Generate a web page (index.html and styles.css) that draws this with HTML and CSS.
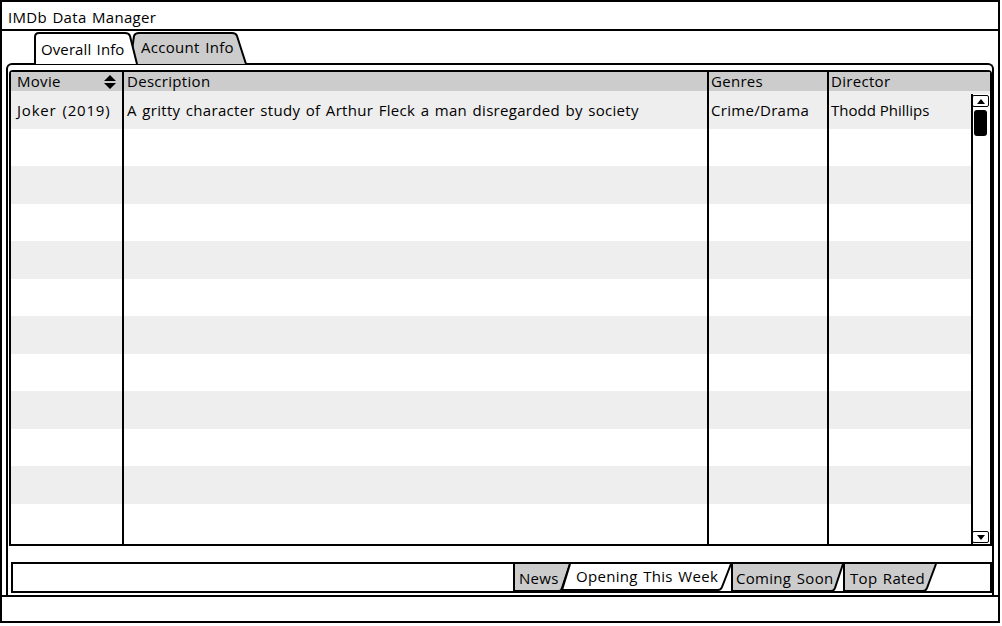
FILE: index.html
```html
<!DOCTYPE html>
<html>
<head>
<meta charset="utf-8">
<link rel="stylesheet" href="styles.css">
</head>
<body>
<div class="window">
  <div class="titlebar">IMDb Data Manager</div>
  <div class="main">
    <div class="tabrow">
      <div class="tabstrip">
        <svg class="shapes" width="216" height="32" viewBox="0 0 216 32">
          <path class="off" d="M96,32 L100,4 Q101,1 105,1 H198 Q202,1 203,4 L212,32"/>
          <path class="on" d="M1,32 V5 Q1,1 5,1 H91 Q95,1 96,4 L103,32"/>
        </svg>
        <span class="tl tl-overall">Overall Info</span>
        <span class="tl tl-account">Account Info</span>
      </div>
    </div>
    <div class="panel">
      <div class="grid">
        <div class="ghead">
          <div class="hc c1"><span>Movie</span>
            <svg class="sort" width="12" height="14" viewBox="0 0 12 14"><path d="M0,6 L6,0 L12,6 Z M0,8 L12,8 L6,14 Z"/></svg>
          </div>
          <div class="hc c2">Description</div>
          <div class="hc c3">Genres</div>
          <div class="hc c4">Director</div>
        </div>
        <div class="gbody">
          <div class="row alt"><div class="cell c1 year">Joker (2019)</div><div class="cell c2">A gritty character study of Arthur Fleck a man disregarded by society</div><div class="cell c3">Crime/Drama</div><div class="cell c4">Thodd Phillips</div></div>
          <div class="row"><div class="cell c1"></div><div class="cell c2"></div><div class="cell c3"></div><div class="cell c4"></div></div>
          <div class="row alt"><div class="cell c1"></div><div class="cell c2"></div><div class="cell c3"></div><div class="cell c4"></div></div>
          <div class="row"><div class="cell c1"></div><div class="cell c2"></div><div class="cell c3"></div><div class="cell c4"></div></div>
          <div class="row alt"><div class="cell c1"></div><div class="cell c2"></div><div class="cell c3"></div><div class="cell c4"></div></div>
          <div class="row"><div class="cell c1"></div><div class="cell c2"></div><div class="cell c3"></div><div class="cell c4"></div></div>
          <div class="row alt"><div class="cell c1"></div><div class="cell c2"></div><div class="cell c3"></div><div class="cell c4"></div></div>
          <div class="row"><div class="cell c1"></div><div class="cell c2"></div><div class="cell c3"></div><div class="cell c4"></div></div>
          <div class="row alt"><div class="cell c1"></div><div class="cell c2"></div><div class="cell c3"></div><div class="cell c4"></div></div>
          <div class="row"><div class="cell c1"></div><div class="cell c2"></div><div class="cell c3"></div><div class="cell c4"></div></div>
          <div class="row alt"><div class="cell c1"></div><div class="cell c2"></div><div class="cell c3"></div><div class="cell c4"></div></div>
          <div class="row last"><div class="cell c1"></div><div class="cell c2"></div><div class="cell c3"></div><div class="cell c4"></div></div>
          <div class="scrollbar">
            <div class="sb-btn"><svg width="8" height="5" viewBox="0 0 8 5"><path d="M0,5 L4,0 L8,5 Z"/></svg></div>
            <div class="sb-thumb"></div>
            <div class="sb-space"></div>
            <div class="sb-btn"><svg width="8" height="5" viewBox="0 0 8 5"><path d="M0,0 L8,0 L4,5 Z"/></svg></div>
          </div>
        </div>
      </div>
      <div class="bottombox">
        <div class="btabs">
          <svg class="shapes" width="424" height="29" viewBox="0 0 424 29">
            <path class="off" d="M1,0 V27 H46 Q48,27 49,24 L57,0"/>
            <path class="off" d="M219,0 V27 H318 Q321,27 322,24 L330,0"/>
            <path class="off" d="M331,0 V27 H410 Q413,27 414,24 L423,0"/>
            <path class="on" d="M57,0 L49,26 H205 Q208,26 209,23 L218,0"/>
          </svg>
          <span class="bl bl-news">News</span>
          <span class="bl bl-open">Opening This Week</span>
          <span class="bl bl-coming">Coming Soon</span>
          <span class="bl bl-top">Top Rated</span>
        </div>
      </div>
    </div>
  </div>
  <div class="status"></div>
</div>
</body>
</html>
```

FILE: styles.css
```css
* { box-sizing: border-box; }
body {
  margin: 0;
  background: #fff;
  font-family: "Open Sans", "Liberation Sans", sans-serif;
  font-size: 15px;
  letter-spacing: 0.3px;
  word-spacing: 1.3px;
  color: #000;
}
.window {
  width: 1000px;
  height: 623px;
  border: 2px solid #000;
  display: flex;
  flex-direction: column;
}
.titlebar {
  flex: none;
  height: 29px;
  border-bottom: 2px solid #000;
  padding: 3px 0 0 6px;
  line-height: 24px;
  white-space: nowrap;
}
.main {
  flex: none;
  height: 564px;
  padding: 1px 4px 0 4px;
  display: flex;
  flex-direction: column;
}
.tabrow {
  flex: none;
  height: 31px;
  padding-left: 28px;
}
.tabstrip {
  position: relative;
  width: 216px;
  height: 31px;
  display: flex;
  align-items: flex-start;
}
.shapes {
  position: absolute;
  left: 0;
  top: 0;
}
.shapes path {
  stroke: #000;
  stroke-width: 2;
  stroke-linejoin: round;
}
.shapes .off { fill: #cccccc; }
.shapes .on { fill: #ffffff; }
.tl, .bl {
  position: relative;
  line-height: 20px;
  white-space: nowrap;
}
.tl-overall { width: 100px; padding: 7px 0 0 7px; letter-spacing: 0.1px; }
.tl-account { width: 112px; padding: 5px 0 0 7px; }

.panel {
  flex: 1;
  border: 2px solid #000;
  border-bottom: none;
  border-radius: 6px 6px 0 0;
  padding: 5px 0 0 1px;
  display: flex;
  flex-direction: column;
}
.grid {
  flex: none;
  height: 476px;
  border: 2px solid #000;
  border-radius: 4px 4px 0 0;
  display: flex;
  flex-direction: column;
}
.ghead, .row {
  display: grid;
  grid-template-columns: 113px 585px 120px 1fr;
}
.ghead {
  flex: none;
  height: 19px;
  background: #cccccc;
  line-height: 19px;
}
.hc, .cell {
  border-right: 2px solid #000;
  white-space: nowrap;
  overflow: hidden;
}
.c4 { border-right: none; }
.hc.c1 {
  display: flex;
  justify-content: space-between;
  align-items: center;
  padding: 0 6px 0 6px;
}
.hc.c2 { padding-left: 3px; }
.hc.c3, .hc.c4 { padding-left: 2px; }
.sort path { fill: #000; }
.gbody {
  flex: 1;
  position: relative;
  display: flex;
  flex-direction: column;
}
.row { flex: 0 0 37.5px; }
.row.last { flex: 1 1 auto; }
.row.alt { background: #eeeeee; }
.cell {
  display: flex;
  align-items: center;
}
.cell.c1 { padding-left: 6px; }
.cell.c2 { padding-left: 3px; }
.cell.c3 { padding-left: 2px; }
.cell.c4 { padding-left: 2px; letter-spacing: 0; word-spacing: 0; }
.cell.year { letter-spacing: 0.8px; }

.scrollbar {
  position: absolute;
  top: 3px;
  right: 0;
  bottom: 0;
  width: 19px;
  border-left: 2px solid #000;
  background: #fff;
  display: flex;
  flex-direction: column;
  padding: 1px 1px 1px 0;
}
.sb-btn {
  flex: none;
  height: 12px;
  margin-left: -1px;
  border: 1.5px solid #000;
  border-radius: 2px;
  display: flex;
  align-items: center;
  justify-content: center;
}
.sb-btn path { fill: #000; }
.sb-thumb {
  flex: none;
  height: 26px;
  margin: 3px 2px 0 1px;
  background: #000;
  border-radius: 3px;
}
.sb-space { flex: 1; }

.bottombox {
  flex: none;
  height: 31px;
  margin: 16px 0 0 2px;
  border: 2px solid #000;
  padding-left: 500px;
}
.btabs {
  position: relative;
  width: 424px;
  height: 27px;
  display: flex;
  align-items: flex-start;
}
.bl-news { width: 57px; padding: 4px 0 0 6px; }
.bl-open { width: 161px; padding: 2px 0 0 6px; }
.bl-coming { width: 112px; padding: 4px 0 0 5px; }
.bl-top { width: 93px; padding: 4px 0 0 7px; }

.status {
  flex: 1;
  border-top: 2px solid #000;
}
```
